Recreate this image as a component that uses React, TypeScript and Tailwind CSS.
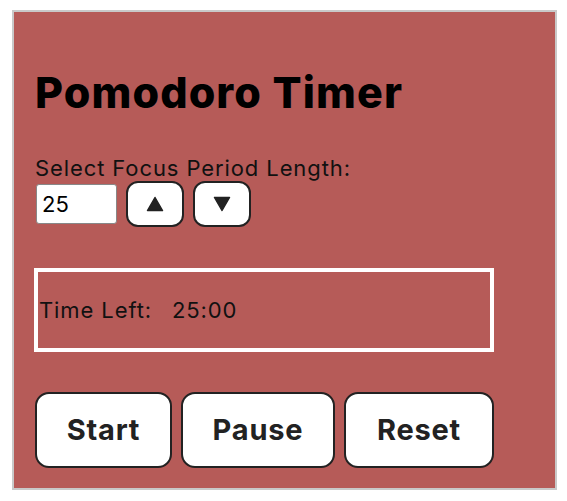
import { useState } from 'react'

export default function App() {
  const [minutes, setMinutes] = useState(25)

  const timeLeft = `${String(minutes).padStart(2, '0')}:00`

  return (
    <div className="min-h-screen bg-white pl-3 pt-[10px] font-['Inter',sans-serif]">
      <div className="w-[545px] h-[480px] border-2 border-[#c9c9c9] bg-[#b65b58] px-[21px] pt-[59px]">
        <h1 className="text-[43px] leading-none font-extrabold text-black tracking-[1.1px]">Pomodoro Timer</h1>

        <p className="mt-[41px] text-[22px] leading-[26px] tracking-[0.9px] text-[#111]">Select Focus Period Length:</p>
        <div className="flex items-center gap-[9px]">
          <input
            type="number"
            value={minutes}
            onChange={(e) => setMinutes(Number(e.target.value))}
            className="w-[81px] h-[40px] ml-[1px] bg-white border border-[#888] rounded-[3px] px-[5px] text-[22px] text-black outline-none [appearance:textfield] [&::-webkit-inner-spin-button]:appearance-none"
          />
          <button
            onClick={() => setMinutes((m) => m + 1)}
            className="w-[58px] h-[46px] bg-white border-2 border-[#222] rounded-[12px] flex items-center justify-center"
          >
            <svg width="18" height="16" viewBox="0 0 18 16">
              <path d="M9 1.5 L16.5 14.5 H1.5 Z" fill="#222" stroke="#222" strokeWidth="1.5" strokeLinejoin="round" />
            </svg>
          </button>
          <button
            onClick={() => setMinutes((m) => Math.max(1, m - 1))}
            className="w-[58px] h-[46px] bg-white border-2 border-[#222] rounded-[12px] flex items-center justify-center"
          >
            <svg width="18" height="16" viewBox="0 0 18 16">
              <path d="M1.5 1.5 H16.5 L9 14.5 Z" fill="#222" stroke="#222" strokeWidth="1.5" strokeLinejoin="round" />
            </svg>
          </button>
        </div>

        <div className="mt-[41px] w-[460px] h-[84px] -ml-px border-4 border-white flex items-center pl-px text-[22px] tracking-[0.9px] text-[#111]">
          <span>Time Left:</span>
          <span className="ml-[20px]">{timeLeft}</span>
        </div>

        <div className="flex gap-[9px] mt-[40px]">
          <button className="w-[137px] h-[76px] bg-white border-2 border-[#222] rounded-[14px] text-[29px] tracking-[0.8px] font-bold text-[#222]">
            Start
          </button>
          <button className="w-[154px] h-[76px] bg-white border-2 border-[#222] rounded-[14px] text-[29px] tracking-[0.8px] font-bold text-[#222]">
            Pause
          </button>
          <button className="w-[150px] h-[76px] bg-white border-2 border-[#222] rounded-[14px] text-[29px] tracking-[0.8px] font-bold text-[#222]">
            Reset
          </button>
        </div>
      </div>
    </div>
  )
}
